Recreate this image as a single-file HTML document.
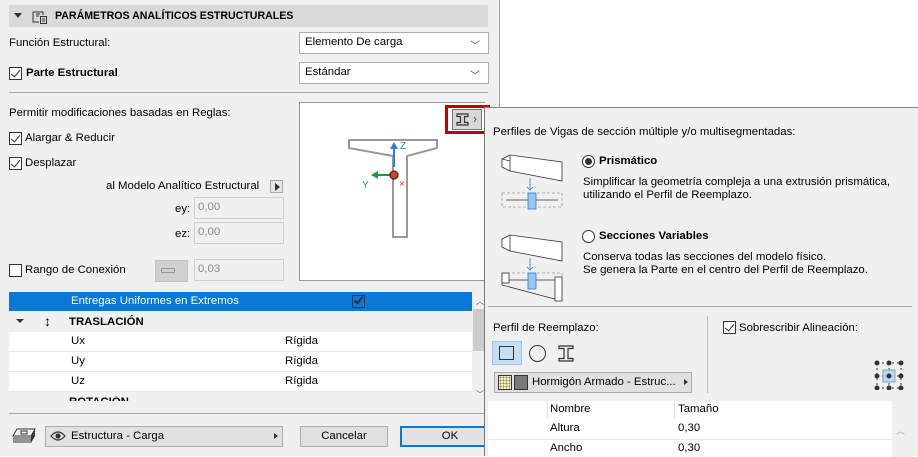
<!DOCTYPE html>
<html><head><meta charset="utf-8"><style>
*{box-sizing:border-box;margin:0;padding:0}
body{width:918px;height:456px;background:#fff;position:relative;overflow:hidden;font-family:"Liberation Sans","DejaVu Sans",sans-serif;font-size:11.4px;color:#000}
.a{position:absolute}
.dlg{left:0;top:0;width:500px;height:456px;background:#f0f0f0;border-right:1px solid #a0a0a0}
.sel{background:#fff;border:1px solid #adadad;height:22px;padding:3px 5px}
.chev{position:absolute;right:8px;top:4px;font-size:10px;color:#444}
.cb{width:13px;height:13px;border:1px solid #333;background:#fff;position:absolute}
.cb.on::after{content:"";position:absolute;left:3px;top:0px;width:4px;height:8px;border:solid #333;border-width:0 1.5px 1.5px 0;transform:rotate(40deg)}
.inp{background:#f0f0f0;border:1px solid #cfcfcf;height:22px;padding:3px 3px;color:#888}
.pop{left:484px;top:107px;width:434px;height:349px;background:#f0f0f0;border-left:1px solid #777;border-top:1px solid #888}
.row{position:absolute;left:9px;width:463px;height:20px;background:#fff;border-bottom:1px solid #e8e8e8}
</style></head><body>
<div class="a dlg">
 <div class="a" style="left:9px;top:5px;width:479px;height:22px;background:#d9d9d9;border-radius:2px"></div>
 <div class="a" style="left:14px;top:13px;border:4px solid transparent;border-top:5px solid #333"></div>
 <svg class="a" style="left:31px;top:8px" width="18" height="17" viewBox="0 0 18 17" fill="none" stroke="#333" stroke-width="1"><path d="M2 4h10v3M2 4v10h6M5 6h4M5 8h3"/><rect x="9.5" y="8.5" width="6" height="7"/><path d="M11 11h3M11 13h3"/></svg>
 <div class="a" style="left:55px;top:10px;font-weight:bold;font-size:10.6px">PARÁMETROS ANALÍTICOS ESTRUCTURALES</div>
 <div class="a" style="left:9px;top:37px">Función Estructural:</div>
 <div class="a sel" style="left:299px;top:32px;width:190px">Elemento De carga<span class="chev">﹀</span></div>
 <div class="cb on" style="left:9px;top:67px"></div>
 <div class="a" style="left:26px;top:67px;font-weight:bold">Parte Estructural</div>
 <div class="a sel" style="left:299px;top:62px;width:190px">Estándar<span class="chev">﹀</span></div>
 <div class="a" style="left:9px;top:92px;width:479px;height:1px;background:#a8a8a8"></div>
 <div class="a" style="left:9px;top:107px">Permitir modificaciones basadas en Reglas:</div>
 <div class="cb on" style="left:9px;top:132px"></div><div class="a" style="left:25px;top:132px">Alargar &amp; Reducir</div>
 <div class="cb on" style="left:9px;top:157px"></div><div class="a" style="left:25px;top:157px">Desplazar</div>
 <div class="a" style="left:106px;top:180px">al Modelo Analítico Estructural</div>
 <div class="a" style="left:270px;top:180px;width:13px;height:13px;border:1px solid #aaa;background:#e5e5e5"></div>
 <div class="a" style="left:275px;top:183px;border:4px solid transparent;border-left:5px solid #333;border-right:0"></div>
 <div class="a" style="left:175px;top:203px">ey:</div><div class="a inp" style="left:194px;top:197px;width:90px">0,00</div>
 <div class="a" style="left:175px;top:228px">ez:</div><div class="a inp" style="left:194px;top:222px;width:90px">0,00</div>
 <div class="cb" style="left:9px;top:264px"></div><div class="a" style="left:25px;top:264px">Rango de Conexión</div>
 <div class="a" style="left:155px;top:260px;width:33px;height:22px;background:#d0d0d0;border:1px solid #c4c4c4"></div>
 <div class="a" style="left:161px;top:268px;width:14px;height:5px;border:1px solid #999"></div>
 <div class="a inp" style="left:194px;top:259px;width:90px">0,03</div>
 <div class="a" style="left:299px;top:102px;width:186px;height:179px;background:#fff;border:1px solid #999;border-right:0"></div>
 <svg class="a" style="left:345px;top:135px" width="100" height="112" viewBox="0 0 100 112" fill="none"><path d="M4 4h88v8l-30 8v81h-14v-81l-44-8z" stroke="#999" stroke-width="2" transform="translate(0,1)"/><path d="M49 32v-22" stroke="#2a7de1" stroke-width="2"/><path d="M45 14l4-7 4 7z" fill="#2a7de1"/><path d="M49 40h-20" stroke="#1a9b3a" stroke-width="2"/><path d="M33 36l-7 4 7 4z" fill="#1a9b3a"/><circle cx="49" cy="40" r="4" fill="#e5391e" stroke="#333" stroke-width="1.3"/><text x="55" y="14" font-size="10" fill="#2a7de1" font-family="Liberation Sans">Z</text><text x="17" y="53" font-size="10" fill="#1a9b3a" font-family="Liberation Sans">Y</text><text x="54" y="52" font-size="10" fill="#e5391e" font-family="Liberation Sans">×</text></svg>
 <div class="a" style="left:445px;top:105px;width:45px;height:29px;border:3px solid #c00000"></div>
 <div class="a" style="left:452px;top:109px;width:30px;height:21px;background:#d8d8d8;border:1px solid #777"></div>
 <svg class="a" style="left:455px;top:112px" width="24" height="15" viewBox="0 0 24 15" fill="none" stroke="#333" stroke-width="1.2"><path d="M2 2h11v2.5h-3.5v6h3.5v2.5h-11v-2.5h3.5v-6h-3.5z"/><path d="M19 5l2 2.5-2 2.5" stroke="#666"/></svg>
 <div class="a" style="left:9px;top:292px;width:463px;height:19px;background:#0a78d7"></div>
 <div class="a" style="left:71px;top:295px;color:#fff">Entregas Uniformes en Extremos</div>
 <div class="a" style="left:352px;top:295px;width:13px;height:13px;border:1px solid #333;background:#0a78d7"></div>
 <div class="a" style="left:356px;top:295px;width:5px;height:9px;border:solid #333;border-width:0 2px 2px 0;transform:rotate(40deg)"></div>
 <div class="a" style="left:16px;top:319px;border:4px solid transparent;border-top:4px solid #333"></div>
 <div class="a" style="left:44px;top:313px;font-size:14px">↕</div>
 <div class="a" style="left:69px;top:316px;font-weight:bold">TRASLACIÓN</div>
 <div class="row" style="top:332px"></div><div class="a" style="left:71px;top:335px">Ux</div><div class="a" style="left:285px;top:335px">Rígida</div>
 <div class="row" style="top:352px"></div><div class="a" style="left:71px;top:355px">Uy</div><div class="a" style="left:285px;top:355px">Rígida</div>
 <div class="row" style="top:372px"></div><div class="a" style="left:71px;top:375px">Uz</div><div class="a" style="left:285px;top:375px">Rígida</div>
 <div class="a" style="left:69px;top:396px;font-weight:bold;height:5px;overflow:hidden;line-height:12px">ROTACIÓN</div>
 <div class="a" style="left:473px;top:292px;width:14px;height:109px;background:#f0f0f0"></div>
 <div class="a" style="left:473px;top:309px;width:13px;height:42px;background:#cdcdcd"></div>
 <div class="a" style="left:476px;top:296px;font-size:8px;color:#555">︿</div>
 <div class="a" style="left:476px;top:389px;font-size:8px;color:#555">﹀</div>
 <div class="a" style="left:9px;top:413px;width:491px;height:1px;background:#a8a8a8"></div>
 <svg class="a" style="left:11px;top:427px" width="26" height="16" viewBox="0 0 26 16" fill="none" stroke="#333" stroke-width="1"><path d="M6 2h18l-4 7h-18z"/><path d="M2 11h18l4-7M2 13h18l4-7M2 15h18l4-7"/><path d="M10 4h6v3h-6z"/></svg>
 <div class="a" style="left:45px;top:426px;width:238px;height:21px;background:#e1e1e1;border:1px solid #adadad"></div>
 <svg class="a" style="left:50px;top:431px" width="16" height="10" viewBox="0 0 16 10" fill="none" stroke="#333" stroke-width="1.2"><path d="M1 5q7-8 14 0q-7 8-14 0z"/><circle cx="8" cy="5" r="2" fill="#333"/></svg>
 <div class="a" style="left:71px;top:430px">Estructura - Carga</div>
 <div class="a" style="left:274px;top:433px;border:3px solid transparent;border-left:4px solid #333;border-right:0"></div>
 <div class="a" style="left:300px;top:426px;width:88px;height:21px;background:#e1e1e1;border:1px solid #adadad;text-align:center;padding-top:3px">Cancelar</div>
 <div class="a" style="left:400px;top:426px;width:100px;height:21px;background:#e1e1e1;border:2px solid #0a78d7;text-align:center;padding-top:2px">OK</div>
</div>
<div class="a pop">
 <div class="a" style="left:8px;top:18px">Perfiles de Vigas de sección múltiple y/o multisegmentadas:</div>
 <svg class="a" style="left:15px;top:45px" width="70" height="160" viewBox="0 0 70 160" fill="none" stroke="#333" stroke-width="0.8">
  <path d="M2 6l8-4 52 7v19l-52-10-8-4z" fill="#fff"/><path d="M10 2v16M2 6l8 2"/>
  <path d="M30 25v12" stroke="#2a7de1"/><path d="M27 34l3 3 3-3" stroke="#2a7de1"/>
  <rect x="2" y="40" width="60" height="14" stroke="#999" stroke-dasharray="3 2"/><path d="M6 47h52"/><rect x="28" y="40" width="8" height="16" fill="#9cc4ec" stroke="#2a7de1"/>
  <path d="M2 86l8-4 52 7v19l-52-10-8-4z" fill="#fff"/><path d="M10 82v16"/>
  <path d="M30 105v12" stroke="#2a7de1"/><path d="M27 114l3 3 3-3" stroke="#2a7de1"/>
  <path d="M2 120h60v28" stroke="#999" stroke-dasharray="3 2"/><path d="M2 120v12l60 16"/>
  <rect x="2" y="120" width="7" height="10" fill="#fff"/><rect x="55" y="124" width="7" height="24" fill="#fff"/><path d="M9 127h46"/><rect x="28" y="120" width="8" height="16" fill="#9cc4ec" stroke="#2a7de1"/>
 </svg>
 <div class="a" style="left:97px;top:47px;width:13px;height:13px;border-radius:50%;border:1px solid #333;background:#fff"></div>
 <div class="a" style="left:100px;top:50px;width:7px;height:7px;border-radius:50%;background:#333"></div>
 <div class="a" style="left:114px;top:47px;font-weight:bold">Prismático</div>
 <div class="a" style="left:98px;top:68px;line-height:13px">Simplificar la geometría compleja a una extrusión prismática,<br>utilizando el Perfil de Reemplazo.</div>
 <div class="a" style="left:97px;top:122px;width:13px;height:13px;border-radius:50%;border:1px solid #333;background:#fff"></div>
 <div class="a" style="left:114px;top:122px;font-weight:bold">Secciones Variables</div>
 <div class="a" style="left:98px;top:143px;line-height:13px">Conserva todas las secciones del modelo físico.<br>Se genera la Parte en el centro del Perfil de Reemplazo.</div>
 <div class="a" style="left:3px;top:198px;width:424px;height:1px;background:#a8a8a8"></div>
 <div class="a" style="left:8px;top:214px">Perfil de Reemplazo:</div>
 <div class="a" style="left:222px;top:208px;width:1px;height:77px;background:#bbb"></div>
 <div class="cb on" style="left:238px;top:213px"></div><div class="a" style="left:254px;top:214px">Sobrescribir Alineación:</div>
 <div class="a" style="left:7px;top:233px;width:30px;height:24px;background:#c5dff5;border:1px solid #9cc4ec"></div>
 <div class="a" style="left:14px;top:238px;width:15px;height:14px;border:1px solid #333"></div>
 <div class="a" style="left:44px;top:237px;width:17px;height:17px;border:1px solid #333;border-radius:50%"></div>
 <svg class="a" style="left:73px;top:237px" width="16" height="17" viewBox="0 0 16 17" fill="none" stroke="#333" stroke-width="1.2"><path d="M1 1h14v2.5h-5v10h5v2.5h-14v-2.5h5v-10h-5z"/></svg>
 <div class="a" style="left:9px;top:264px;width:198px;height:21px;background:#e1e1e1;border:1px solid #adadad"></div>
 <div class="a" style="left:13px;top:267px;width:14px;height:15px;background:#f4f0b0;border:1px solid #333;background-image:radial-gradient(#887 1px,transparent 1px);background-size:3px 3px"></div>
 <div class="a" style="left:29px;top:267px;width:14px;height:15px;background:#7a7a7a;border:1px solid #333"></div>
 <div class="a" style="left:47px;top:268px">Hormigón Armado - Estruc...</div>
 <div class="a" style="left:199px;top:271px;border:3px solid transparent;border-left:4px solid #333;border-right:0"></div>
 <svg class="a" style="left:389px;top:252px" width="30" height="30" viewBox="0 0 30 30" fill="none" stroke="#333" stroke-width="1"><path d="M3 3h24M3 16h24M3 28h24M3 3v25M15 3v25M27 3v25" stroke-dasharray="2 3"/><rect x="9" y="10" width="12" height="12" fill="#b8d8f5" stroke="#7ab"/><g fill="#333"><circle cx="3" cy="3" r="2"/><circle cx="15" cy="3" r="2"/><circle cx="27" cy="3" r="2"/><circle cx="3" cy="16" r="2"/><circle cx="15" cy="16" r="2"/><circle cx="27" cy="16" r="2"/><circle cx="3" cy="28" r="2"/><circle cx="15" cy="28" r="2"/><circle cx="27" cy="28" r="2"/></g></svg>
 <div class="a" style="left:3px;top:293px;width:404px;height:56px;background:#fff"></div>
 <div class="a" style="left:62px;top:293px;width:1px;height:18px;background:#e0e0e0"></div>
 <div class="a" style="left:189px;top:293px;width:1px;height:18px;background:#e0e0e0"></div>
 <div class="a" style="left:65px;top:295px">Nombre</div><div class="a" style="left:193px;top:295px">Tamaño</div>
 <div class="a" style="left:65px;top:314px">Altura</div><div class="a" style="left:193px;top:314px">0,30</div>
 <div class="a" style="left:3px;top:331px;width:404px;height:1px;background:#e8e8e8"></div>
 <div class="a" style="left:65px;top:334px">Ancho</div><div class="a" style="left:193px;top:334px">0,30</div>
 <div class="a" style="left:407px;top:310px;width:20px;height:39px;background:#f0f0f0"></div>
 <div class="a" style="left:411px;top:316px;font-size:9px;color:#aaa">︿</div>
</div>
</body></html>
